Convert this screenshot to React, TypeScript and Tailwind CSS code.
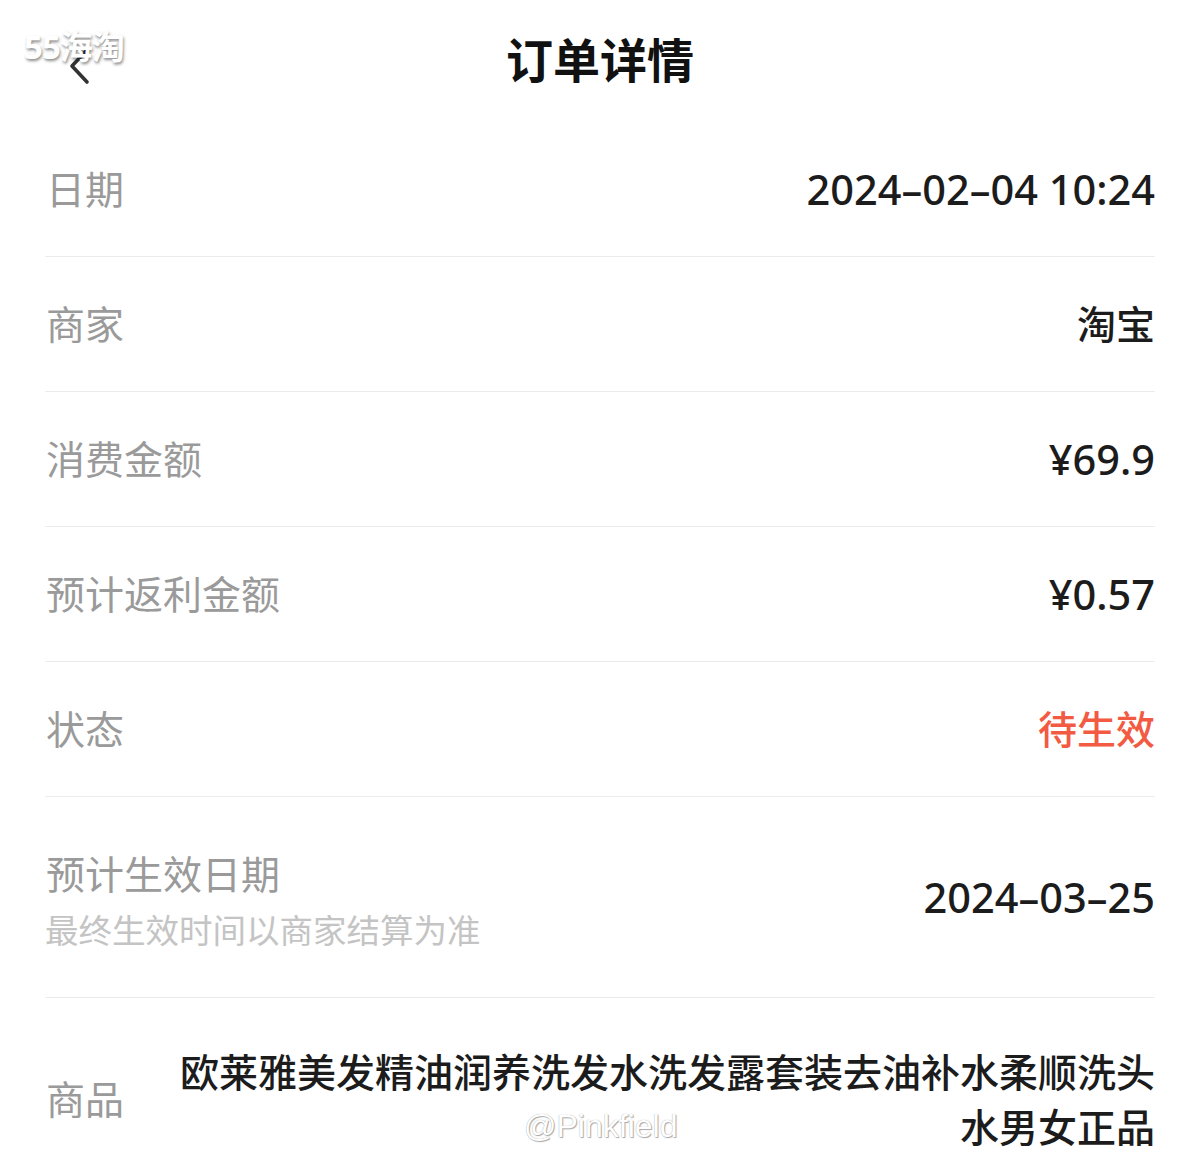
import React from 'react';

const rows = [
  { label: '日期', value: '2024–02–04 10:24', num: true },
  { label: '商家', value: '淘宝' },
  { label: '消费金额', value: '¥69.9', num: true },
  { label: '预计返利金额', value: '¥0.57', num: true },
  { label: '状态', value: '待生效', red: true },
];

const font = { fontFamily: '"Noto Sans", "Noto Sans CJK SC", sans-serif' };

export default function App() {
  return (
    <div className="relative w-[1200px] h-[1172px] overflow-hidden bg-white" style={font}>
      {/* Header */}
      <div className="relative h-[122px] flex items-center justify-center">
        <button className="absolute left-[62px] top-[46px] w-[34px] h-[40px] flex items-center justify-center">
          <svg width="26" height="38" viewBox="0 0 26 38" fill="none">
            <path d="M21 3L6 19l15 16" stroke="#333" strokeWidth="3.6" strokeLinecap="round" strokeLinejoin="round" />
          </svg>
        </button>
        <h1 className="text-[47px] font-bold text-[#111] leading-none -mt-[2px]">订单详情</h1>
      </div>

      {/* Rows */}
      <div className="px-[45px]">
        {rows.map((r) => (
          <div key={r.label} className="h-[135px] flex items-center justify-between border-b border-[#ececec]">
            <span className="text-[39px] text-[#9a9a9a] pl-[1px]">{r.label}</span>
            <span
              className={`${r.num ? 'text-[41.5px]' : 'text-[39px]'} font-medium ${r.red ? 'text-[#f25a42]' : 'text-[#1c1c1c]'}`}
            >
              {r.value}
            </span>
          </div>
        ))}

        <div className="h-[201px] flex items-center justify-between border-b border-[#ececec]">
          <div className="flex flex-col pt-[10px]">
            <span className="text-[39px] leading-[50px] text-[#9a9a9a] pl-[1px]">预计生效日期</span>
            <span className="text-[33.5px] leading-[50px] text-[#c4c4c4] mt-[6px]">最终生效时间以商家结算为准</span>
          </div>
          <span className="text-[41.5px] font-medium text-[#1c1c1c]">2024–03–25</span>
        </div>

        <div className="flex items-center justify-between gap-[40px] pt-[46px] pb-[46px]">
          <span className="text-[39px] text-[#9a9a9a] shrink-0 pl-[1px]">商品</span>
          <span className="text-[39px] leading-[55px] font-medium text-[#1c1c1c] text-right">
            欧莱雅美发精油润养洗发水洗发露套装去油补水柔顺洗头水男女正品
          </span>
        </div>
      </div>

      {/* Watermarks */}
      <span
        className="absolute left-[24px] top-[22px] text-[33px] font-bold text-white tracking-[-1px]"
        style={{ textShadow: '1px 2px 3px rgba(0,0,0,0.45)' }}
      >
        55海淘
      </span>
      <span
        className="absolute left-[524px] top-[1102px] text-[32px] text-white"
        style={{ textShadow: '0 0 1px #999, 1px 1px 1px #aaa', fontFamily: '"Liberation Sans", sans-serif' }}
      >
        @Pinkfield
      </span>
    </div>
  );
}
